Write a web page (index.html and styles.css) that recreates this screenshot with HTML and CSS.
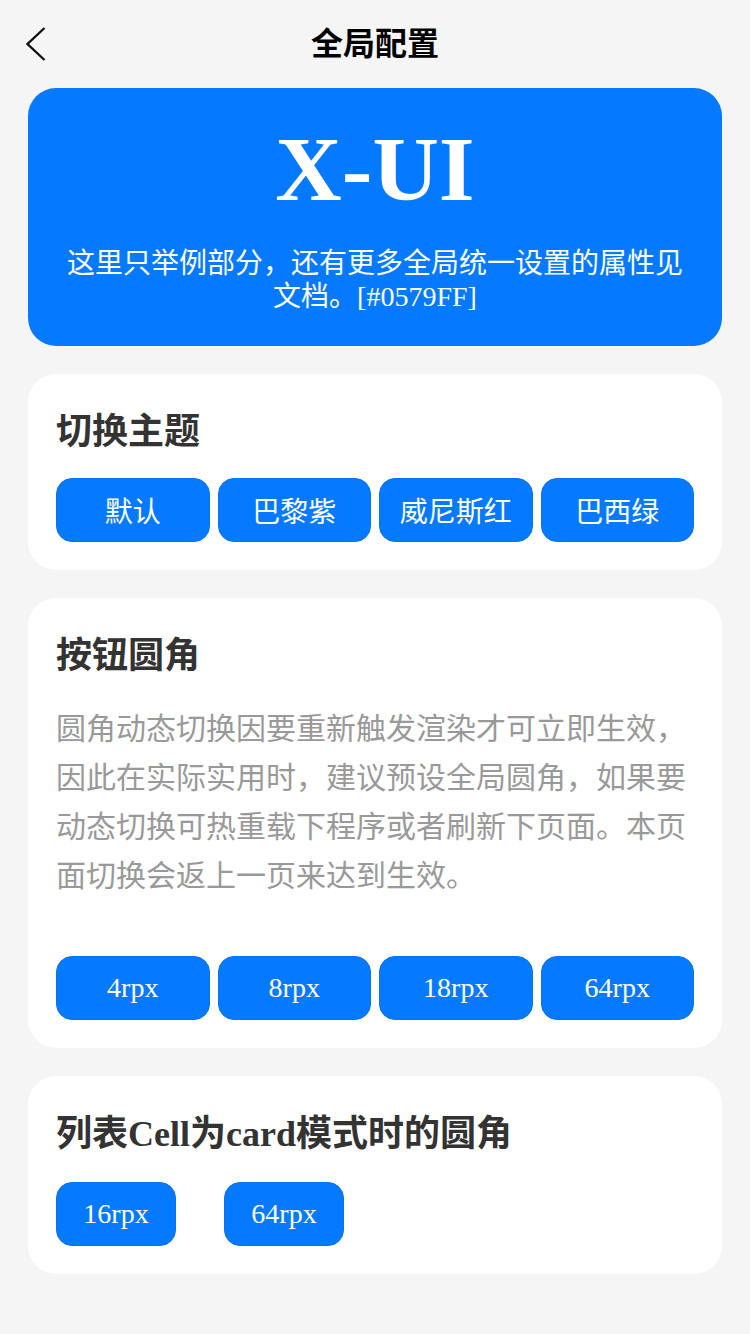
FILE: index.html
```html
<!DOCTYPE html>
<html lang="zh-CN">
<head>
<meta charset="utf-8">
<title>全局配置</title>
<link rel="stylesheet" href="styles.css">
</head>
<body>
<div class="page">
  <header class="nav">
    <span class="nav-back">
      <svg width="24" height="36" viewBox="0 0 24 36"><path d="M20.5 2 L3.5 18 L20.5 34" fill="none" stroke="#111" stroke-width="2.4" stroke-linecap="butt" stroke-linejoin="miter"/></svg>
    </span>
    <h1 class="nav-title">全局配置</h1>
  </header>

  <main class="content">
    <section class="hero">
      <div class="hero-title">X-UI</div>
      <p class="hero-desc">这里只举例部分，还有更多全局统一设置的属性见文档。[#0579FF]</p>
    </section>

    <section class="card">
      <h2 class="card-title">切换主题</h2>
      <div class="btn-row">
        <button class="btn">默认</button>
        <button class="btn">巴黎紫</button>
        <button class="btn">威尼斯红</button>
        <button class="btn">巴西绿</button>
      </div>
    </section>

    <section class="card">
      <h2 class="card-title">按钮圆角</h2>
      <p class="card-text">圆角动态切换因要重新触发渲染才可立即生效，因此在实际实用时，建议预设全局圆角，如果要动态切换可热重载下程序或者刷新下页面。本页面切换会返上一页来达到生效。</p>
      <div class="btn-row">
        <button class="btn">4rpx</button>
        <button class="btn">8rpx</button>
        <button class="btn">18rpx</button>
        <button class="btn">64rpx</button>
      </div>
    </section>

    <section class="card">
      <h2 class="card-title">列表Cell为card模式时的圆角</h2>
      <div class="btn-row btn-row-loose">
        <button class="btn btn-fixed">16rpx</button>
        <button class="btn btn-fixed">64rpx</button>
      </div>
    </section>
  </main>
</div>
</body>
</html>
```

FILE: styles.css
```css
* {
  box-sizing: border-box;
}

html, body {
  margin: 0;
  padding: 0;
  background: #f5f5f5;
}

body {
  font-family: "Liberation Serif", "Noto Sans CJK SC", serif;
  color: #333;
}

.page {
  width: 750px;
  min-height: 1334px;
  background: #f5f5f5;
}

.nav {
  position: relative;
  height: 88px;
  display: flex;
  align-items: center;
  justify-content: center;
}

.nav-back {
  position: absolute;
  left: 24px;
  top: 26px;
  width: 24px;
  height: 36px;
  display: block;
}

.nav-back svg {
  display: block;
}

.nav-title {
  margin: 0;
  font-size: 32px;
  font-weight: bold;
  color: #000;
  line-height: 44px;
}

.content {
  padding: 0 28px 28px;
  display: flex;
  flex-direction: column;
  gap: 28px;
}

.hero {
  background: #0579ff;
  border-radius: 28px;
  padding: 26px 32px 33px;
  color: #fff;
  text-align: center;
}

.hero-title {
  font-size: 92px;
  font-weight: bold;
  line-height: 110px;
  margin-bottom: 23px;
}

.hero-desc {
  margin: 0;
  font-size: 28px;
  line-height: 33px;
}

.card {
  background: #fff;
  border-radius: 28px;
  padding: 28px;
}

.card-title {
  margin: 0;
  font-size: 36px;
  font-weight: bold;
  line-height: 60px;
  color: #333;
}

.card-text {
  margin: 18px 0 56px;
  font-size: 30px;
  line-height: 49px;
  color: #999;
}

.btn-row {
  display: flex;
  gap: 8px;
  margin-top: 16px;
}

.card-text + .btn-row {
  margin-top: 0;
}

.btn-row-loose {
  gap: 48px;
  margin-top: 18px;
}

.btn {
  flex: 1;
  height: 64px;
  border: 1px solid #0a72ee;
  border-radius: 16px;
  background: #0579ff;
  color: #fff;
  font-family: "Liberation Serif", "Noto Sans CJK SC", serif;
  font-size: 28px;
  padding: 0;
  display: flex;
  align-items: center;
  justify-content: center;
}

.btn-fixed {
  flex: 0 0 120px;
}
```
